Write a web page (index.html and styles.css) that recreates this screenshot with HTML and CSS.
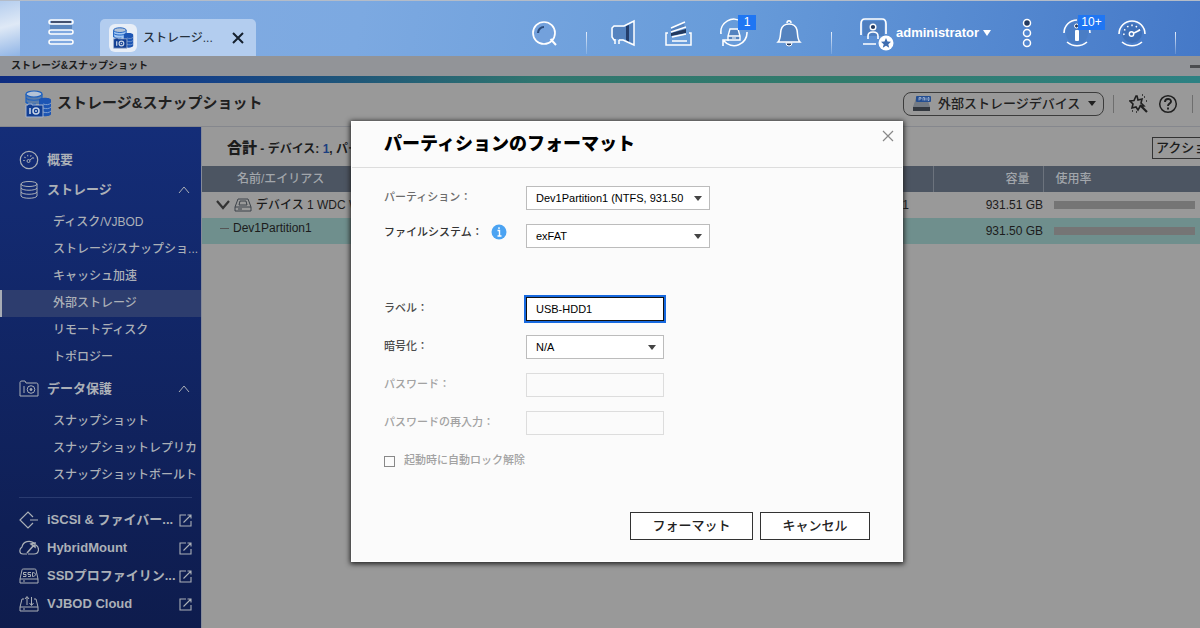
FILE: index.html
```
<!DOCTYPE html>
<html lang="ja">
<head>
<meta charset="utf-8">
<meta name="viewport" content="width=device-width, initial-scale=1">
<title>ストレージ&amp;スナップショット</title>
<link rel="stylesheet" href="styles.css">
</head>
<body>
<svg class="defs" aria-hidden="true">
  <symbol id="storage" viewBox="0 0 26 28">
    <path d="M1 4v10h16V4" fill="currentColor" opacity=".55"/>
    <path d="M1 4v9M17 4v6M1 8c2 3 14 3 16 0M1 12c2 2 6 3 10 2" fill="none" stroke="#1c60c0" stroke-width="1.2"/>
    <ellipse cx="9" cy="4" rx="8" ry="3" fill="#b5c3d6" stroke="#1c60c0" stroke-width="1.2"/>
    <path d="M14 10c0-3 12-3 12 0v14c0 3-12 3-12 0z" fill="#1d55b4"/>
    <path d="M18 14c3 1 6 1 8-1M18 18c3 1 6 1 8-1M18 22c3 1 6 1 8-1" fill="none" stroke="#7f9fd0" stroke-width="1"/>
    <path d="M1 15h2v-1h4v1h11v12H1z" fill="#123f94" stroke="#a4b4d0" stroke-width="1"/>
    <path d="M5 18v6" stroke="#c7d3e6" stroke-width="1.6"/>
    <circle cx="11" cy="21" r="3" fill="none" stroke="#c7d3e6" stroke-width="1.5"/><circle cx="11" cy="21" r="1" fill="#c7d3e6"/>
  </symbol>
  <symbol id="external" viewBox="0 0 13 13"><path d="M7 1H1v11h11V7M8.500 1H12v3.500M12 1 4.500 8.500" fill="none" stroke="currentColor" stroke-width="1.100"/></symbol>
  <symbol id="chevron" viewBox="0 0 12 8"><path d="m1 7 5-6 5 6" fill="none" stroke="currentColor"/></symbol>
</svg>

<header class="topbar">
  <div class="corner"></div>
  <button class="menu" aria-label="メニュー"><svg width="26" height="28" viewBox="0 0 26 28"><path d="M2 5h22v6H2z" fill="#5b87bf"/><g fill="#7fa8e0" stroke="#fff" stroke-width="1.500"><rect x="1" y="1" width="24" height="4" rx="2"/><rect x="1" y="11" width="24" height="4" rx="2"/><rect x="1" y="21" width="24" height="4" rx="2"/></g><path d="M3 3h20" stroke="#43506e" stroke-width="2"/></svg></button>
  <div class="tab">
    <span class="tab-icon"><svg width="22" height="22"><use href="#storage"/></svg></span>
    <span class="tab-name">ストレージ...</span>
    <button class="tab-close" aria-label="タブを閉じる"><svg width="12" height="12" viewBox="0 0 12 12"><path d="m1 1 10 10M11 1 1 11" stroke="#15202e" stroke-width="2"/></svg></button>
  </div>
  <nav class="tools">
    <button class="tool" aria-label="検索"><svg width="28" height="28" viewBox="0 0 28 28" fill="none"><circle cx="14" cy="14" r="11" fill="#73a1dc" stroke="#fff" stroke-width="1.700"/><path d="M8 14a6 6 0 0 1 6-6" stroke="#2c4c7c" stroke-width="2.200"/><path d="m20.500 20 5.500 6" stroke="#fff" stroke-width="2"/></svg></button>
    <i class="sep"></i>
    <button class="tool" aria-label="お知らせ"><svg width="28" height="28" viewBox="0 0 28 28" fill="none"><path d="M3 8h12l9-5v22l-9-5H3z" fill="#5583bf"/><path d="M16 7v14l3 2V6z" fill="#243e6b"/><path d="M5 21H4l-2-3V9l2-2h10l10-5v24l-11-5H9M5 20v5M9 21v4" stroke="#fff" stroke-width="1.500"/></svg></button>
    <button class="tool" aria-label="バックグラウンドタスク"><svg width="28" height="28" viewBox="0 0 28 28" fill="none"><path d="m6 14 15-4v4L6 17z" fill="#22395f"/><path d="m6 10 13-6 1 5-14 4z" fill="#5583bf"/><path d="m6 9 14-6M6 13l15-5M7 18l14-3M3 14H1v12h25V14h-2M7 22h15" stroke="#fff" stroke-width="1.500"/></svg></button>
    <button class="tool" aria-label="外部デバイス"><svg width="30" height="30" viewBox="0 0 30 30" fill="none"><path d="M2 16A13 13 0 0 1 23 4M28 14A13 13 0 0 1 5 23M4 28v-6h6" stroke="#fff" stroke-width="1.600"/><path d="m11 11-2 7v4h12v-4l-2-7zM9 18h12" fill="#5583bf" stroke="#fff" stroke-width="1.400"/><path d="M13 20h4" stroke="#fff"/></svg><b class="badge">1</b></button>
    <button class="tool" aria-label="通知"><svg width="28" height="28" viewBox="0 0 28 28" fill="none"><path d="M11 24a3 3 0 0 0 6 0z" fill="#22395f" stroke="#fff"/><path d="M3 23c3-3 2-7 3-12 1-4 4-6 8-6s7 2 8 6c1 5 0 9 3 12z" fill="#5583bf" stroke="#fff" stroke-width="1.500"/><path d="M12 4c0-3 4-3 4 0" stroke="#fff" stroke-width="1.500"/></svg></button>
    <i class="sep"></i>
    <button class="user"><svg width="34" height="36" viewBox="0 0 34 36" fill="none"><path d="M1 20V9c0-3 1-5 4-5h17c3 0 4 2 4 5v10M3 29h13" stroke="#fff" stroke-width="1.700"/><path d="M3 6h21v15H3z" fill="#4f7fbf"/><circle cx="13" cy="12" r="2.800" fill="#22395f" stroke="#fff" stroke-width="1.400"/><path d="M8 24v-3c0-3 2-4 5-4s5 1 5 4v3" stroke="#fff" stroke-width="1.600"/><circle cx="26" cy="28" r="7.500" fill="#fff"/><path d="m26 23 1.500 3.500 3.500.3-2.700 2.400.9 3.600-3.200-2-3.200 2 .9-3.600-2.700-2.400 3.500-.3z" fill="#3e6db0"/></svg><span>administrator</span><i class="down"></i></button>
    <button class="tool narrow" aria-label="その他"><svg width="12" height="30" viewBox="0 0 12 30" fill="none" stroke="#fff" stroke-width="1.500"><circle cx="6" cy="5" r="3.500" fill="#22395f"/><circle cx="6" cy="15" r="3.500"/><circle cx="6" cy="25" r="3.500"/></svg></button>
    <button class="tool narrow" aria-label="情報"><svg width="30" height="30" viewBox="0 0 30 30" fill="none"><circle cx="15" cy="15" r="11" fill="#4a7dc5"/><path d="M2 15A13 13 0 0 1 15 2M28 15c0-2 0-3-1-5M5 24c6 5 14 5 20 0" stroke="#fff" stroke-width="1.600"/><circle cx="14.500" cy="8" r="2" fill="#22395f" stroke="#fff"/><rect x="13" y="12" width="4" height="11" rx="1" fill="#fff"/></svg><b class="badge wide">10+</b></button>
    <button class="tool wide-tool" aria-label="ダッシュボード"><svg width="30" height="30" viewBox="0 0 30 30" fill="none"><circle cx="15" cy="15" r="10" fill="#3f70b8"/><path d="M2 16a13 13 0 0 1 26 0M5 24c6 5 14 5 20 0" stroke="#fff" stroke-width="1.600"/><path d="M7 17a8 8 0 0 1 16-3" stroke="#fff" stroke-width="1.600" stroke-dasharray="1.500 3"/><circle cx="14.500" cy="16" r="2.200" stroke="#fff" stroke-width="1.400"/><path d="m17 15 6-3" stroke="#fff" stroke-width="1.800"/></svg></button>
    <i class="sep"></i>
  </nav>
</header>

<div class="window-title"><span>ストレージ&amp;スナップショット</span><button class="minimize" aria-label="最小化"></button></div>
<div class="accent"></div>

<div class="app-head">
  <svg class="app-logo" width="26" height="28"><use href="#storage"/></svg>
  <h1>ストレージ&amp;スナップショット</h1>
  <button class="device-menu" aria-haspopup="menu"><svg width="20" height="18" viewBox="0 0 20 18"><path d="m4 3-3 9v3h17v-3l-3-9z" fill="#747b84"/><path d="M1 12h17v4H1z" fill="#33383f"/><rect x="4" y="1" width="15" height="6" rx="1" fill="#244e91"/><path d="M7 5.500v-3h2v1.500H7m4 1.500v-3h1.500v3M14 2.500v3M16 2.500h1v3h-1z" fill="none" stroke="#a9b9d4" stroke-width=".8"/></svg><span>外部ストレージデバイス</span><i class="down"></i></button>
  <i class="rule"></i>
  <button class="head-icon" aria-label="ツール"><svg width="20" height="20" viewBox="0 0 20 20" fill="none" stroke="#202020"><path d="m8 2 1 4 4-1-1 4 3 3-4 .5L9 16l-2-3-4 1 1-4-3-3 4-.5L7 2z" stroke-width="1.600"/><path d="m11 11 7 7" stroke-width="2.200"/><path d="M15 3h1M17 7h1M3 17h1M7 18h1M13 1h1" stroke-width="1.500"/></svg></button>
  <button class="head-icon" aria-label="ヘルプ"><svg width="20" height="20" viewBox="0 0 20 20" fill="none" stroke="#202020"><circle cx="10" cy="10" r="8.300" stroke-width="1.500"/><path d="M7 8c0-4 6-4 6-.5 0 2-3 2.200-3 4.500M10 13.500v2" stroke-width="1.900"/></svg></button>
  <i class="rule"></i>
</div>

<div class="workspace">
  <aside class="sidebar">
    <a class="overview" href="#"><svg width="20" height="20" viewBox="0 0 20 20" fill="none" stroke="currentColor"><circle cx="10" cy="10" r="8.700" stroke-width="1.200"/><path d="M5 11a5 5 0 0 1 10-1" stroke-dasharray="1 2.200" stroke-width="1.500"/><circle cx="9.500" cy="11" r="1.500"/><path d="m11 10 3-2.500"/></svg>概要</a>
    <button class="section"><svg width="20" height="20" viewBox="0 0 20 20" fill="none" stroke="currentColor"><ellipse cx="10" cy="4" rx="8" ry="2.500"/><path d="M2 4v12c1 3 15 3 16 0V4M2 8c1 3 15 3 16 0M2 12c1 3 15 3 16 0"/></svg>ストレージ<svg class="chev" width="12" height="8"><use href="#chevron"/></svg></button>
    <ul>
      <li><a href="#">ディスク/VJBOD</a></li>
      <li><a href="#">ストレージ/スナップショ...</a></li>
      <li><a href="#">キャッシュ加速</a></li>
      <li><a class="current" aria-current="page" href="#">外部ストレージ</a></li>
      <li><a href="#">リモートディスク</a></li>
      <li><a href="#">トポロジー</a></li>
    </ul>
    <button class="section"><svg width="20" height="20" viewBox="0 0 20 20" fill="none" stroke="currentColor"><path d="M1 17V4c0-1 0-2 2-2h3l1 2h10c1 0 2 0 2 2v11zM5 7v7"/><circle cx="12" cy="10.500" r="3.800"/><circle cx="12" cy="10.500" r="1" fill="currentColor"/></svg>データ保護<svg class="chev" width="12" height="8"><use href="#chevron"/></svg></button>
    <ul>
      <li><a href="#">スナップショット</a></li>
      <li><a href="#">スナップショットレプリカ</a></li>
      <li><a href="#">スナップショットボールト</a></li>
    </ul>
    <div class="links">
      <a href="#"><svg width="20" height="18" viewBox="0 0 20 18" fill="none" stroke="currentColor" stroke-width="1.200"><path d="m14 6-5-5-8 8 8 8 5-5M11 9h8"/></svg><span>iSCSI &amp; ファイバー...</span><svg class="ext" width="13" height="13"><use href="#external"/></svg></a>
      <a href="#"><svg width="20" height="18" viewBox="0 0 20 18" fill="none" stroke="currentColor" stroke-width="1.200"><path d="M8 15H4c-4 0-4-5-1-7 1-6 8-7 12-4M17 6c4 3 3 9-2 9H9"/><path d="m8 14 7-8M12 5l4-1v4z" stroke-width="1.500"/></svg><span>HybridMount</span><svg class="ext" width="13" height="13"><use href="#external"/></svg></a>
      <a href="#"><svg width="20" height="18" viewBox="0 0 20 18" fill="none" stroke="currentColor"><path d="M1 12V16h18v-4zM1 12l2-9c0-1 1-1 2-1h10c1 0 2 0 2 1l2 9"/><path d="M7.500 5.500h-3v2h2.500v2H4M12 5.500H9v2h2.500v2H9M13.500 5.500v4c4 0 4-4 0-4M4 14h2"/></svg><span>SSDプロファイリン...</span><svg class="ext" width="13" height="13"><use href="#external"/></svg></a>
      <a href="#"><svg width="20" height="18" viewBox="0 0 20 18" fill="none" stroke="currentColor"><path d="M1 12v4h18v-4zM1 12 3 4h2M19 12l-2-8h-2M8 10V2M6 4l2-2.500L10 4M12.500 2v8M10.500 8l2 2.500 2-2.500M4 14h2"/></svg><span>VJBOD Cloud</span><svg class="ext" width="13" height="13"><use href="#external"/></svg></a>
    </div>
  </aside>

  <main class="content">
    <div class="summary"><p><b>合計</b> - デバイス: <em>1</em>, パー</p><button class="action">アクション</button></div>
    <table>
      <colgroup><col><col class="c-cap"><col class="c-use"></colgroup>
      <thead><tr><th class="name">名前/エイリアス</th><th class="cap">容量</th><th class="use">使用率</th></tr></thead>
      <tbody>
        <tr><td><div class="device"><svg width="14" height="10" viewBox="0 0 14 10"><path d="m1 1 6 7 6-7" fill="none" stroke="#333" stroke-width="2.200"/></svg><svg width="18" height="14" viewBox="0 0 18 14" fill="none" stroke="#3d434a"><path d="M1 9v4h16V9zM1 9l3-8h10l3 8M4 11h4M5 7l1-4h6l1 4z"/></svg><span>デバイス 1 WDC WD</span><span class="count">1</span></div></td><td class="cap">931.51 GB</td><td class="use"><div class="bar"></div></td></tr>
        <tr class="selected"><td><div class="part"><i></i>Dev1Partition1</div></td><td class="cap">931.50 GB</td><td class="use"><div class="bar"></div></td></tr>
      </tbody>
    </table>
  </main>
</div>

<section class="dialog" role="dialog" aria-labelledby="dialog-title">
  <header><h2 id="dialog-title">パーティションのフォーマット</h2><button class="close" aria-label="閉じる"><svg width="12" height="12" viewBox="0 0 12 12"><path d="m1 1 10 10M11 1 1 11" stroke="#888" stroke-width="1.200"/></svg></button></header>
  <form>
    <div class="row"><label class="soft" for="partition">パーティション：</label><div class="pick wide"><select id="partition"><option>Dev1Partition1 (NTFS, 931.50</option></select></div></div>
    <div class="row"><label class="strong" for="fs">ファイルシステム：<svg width="16" height="16" viewBox="0 0 16 16"><circle cx="8" cy="8" r="7.500" fill="#4ba3f2"/><path d="M6.500 6.500H8.500V12M6.500 12h4M8 3.200v1.800" stroke="#fff" stroke-width="1.400" fill="none"/></svg></label><div class="pick wide"><select id="fs"><option>exFAT</option></select></div></div>
    <div class="row apart"><label for="label">ラベル：</label><input class="focused" id="label" type="text" value="USB-HDD1"></div>
    <div class="row"><label for="enc">暗号化：</label><div class="pick"><select id="enc"><option>N/A</option></select></div></div>
    <div class="row off"><label for="pw">パスワード：</label><input id="pw" type="password" disabled></div>
    <div class="row off"><label for="pw2">パスワードの再入力：</label><input id="pw2" type="password" disabled></div>
    <div class="row off"><input id="unlock" type="checkbox" disabled><label class="check-label" for="unlock">起動時に自動ロック解除</label></div>
    <div class="actions"><button class="submit" type="button">フォーマット</button><button class="cancel" type="button">キャンセル</button></div>
  </form>
</section>
</body>
</html>
```
FILE: styles.css
```
* { box-sizing: border-box; }
body {
  margin: 0;
  min-height: 100vh;
  display: flex;
  flex-direction: column;
  overflow: hidden;
  position: relative;
  background: #999;
  color: #1c1c1c;
  font: 500 12px/18px "Liberation Sans", "Noto Sans CJK JP", sans-serif;
}
button { margin: 0; padding: 0; border: 0; background: none; color: inherit; font: inherit; }
a { color: inherit; text-decoration: none; }
ul { margin: 0; padding: 0; list-style: none; }
h1, h2, p { margin: 0; }
svg { display: block; flex: none; }
.defs { position: absolute; width: 0; height: 0; }

.topbar {
  display: flex;
  height: 56px;
  border-top: 1px solid #b4bcc8;
  background: linear-gradient(100deg, #84ace2 0%, #7ca9e1 30%, #689cda 60%, #4579c8 100%);
}
.corner { width: 20px; background: linear-gradient(165deg, #b4cdee, #dfe9f6 45%, #8fb4e6); }
.menu { width: 28px; margin-left: 28px; padding-top: 8px; }
.tab {
  display: flex;
  align-items: center;
  width: 156px;
  height: 37px;
  margin: 18px 0 0 24px;
  padding: 0 12px 0 9px;
  border-radius: 5px 5px 0 0;
  background: #b3cdef;
  color: #26313e;
}
.tab-icon { padding: 3px; border-radius: 6px; background: #e8eef7; color: #69a9f4; }
.tab-name { margin-left: 6px; flex: 1; white-space: nowrap; }
.tools { display: flex; align-items: center; margin-left: auto; padding: 9px 15px 0 0; color: #fff; }
.tool { position: relative; width: 55px; height: 46px; display: grid; place-items: center; }
.narrow { width: 50px; }
.wide-tool { width: 60px; }
.sep { width: 1px; height: 22px; margin: 20px 9px 0 15px; background: linear-gradient(#e6eefa, #ffffff22); }
.sep:last-child { margin-left: 13px; }
.badge {
  position: absolute;
  left: 32px;
  top: 5px;
  width: 18px;
  background: #1f76f3;
  font: 12px/15px "Liberation Sans", sans-serif;
}
.badge.wide { left: 26px; width: 27px; }
.user { display: flex; align-items: center; width: 161px; padding-left: 19px; font-size: 13px; font-weight: bold; }
.user span { margin-left: 2px; }
.down { margin-left: 4px; border: 4px solid transparent; border-top: 6px solid; border-bottom: 0; }

.window-title {
  display: flex;
  align-items: center;
  justify-content: space-between;
  padding-left: 11px;
  background: #929498;
  font-size: 10px;
  font-weight: bold;
  line-height: 20px;
}
.minimize { width: 10px; height: 3px; background: #4b4d50; }
.accent { height: 7px; background: linear-gradient(90deg, #0e2c80, #123d8a 15%, #205878 30%, #30766f 45%, #317b6c 70%, #2d8183); }

.app-head { display: flex; align-items: center; height: 44px; padding: 0 7px 2px 25px; border-bottom: 1px solid #85878d; color: #202020; }
.app-logo { color: #2c66b4; }
h1 { margin-left: 6px; padding-bottom: 2px; font-size: 15px; line-height: 20px; }
.device-menu {
  display: flex;
  align-items: center;
  width: 201px;
  height: 24px;
  margin-left: auto;
  padding: 0 7px 0 8px;
  border: 1px solid #3c3c3c;
  border-radius: 8px;
  font-size: 13px;
  white-space: nowrap;
}
.device-menu span { margin-left: 6px; flex: 1; text-align: left; }
.device-menu .down { border-top-width: 5px; }
.rule { width: 1px; height: 18px; margin: 0 0 0 9px; background: #6e6e6e; }
.rule + .head-icon { margin-left: 15px; }
.head-icon + .head-icon { margin-left: 9px; }
.head-icon + .rule { margin-left: 14px; }

.workspace { display: flex; flex: 1; }
.sidebar { flex: none; width: 202px; padding: 21px 0 10px; border-right: 1px solid #858a99; background: linear-gradient(#142d78, #0f1f55 80%, #0e1c4d); color: #abb0b7; }
.overview, .section { display: flex; align-items: center; width: 100%; padding: 0 11px 0 19px; gap: 8px; font-size: 13px; font-weight: bold; }
.overview { height: 24px; }
.section { height: 36px; }
.chev { margin-left: auto; }
.sidebar ul { padding-top: 1px; }
.sidebar li a { display: block; padding-left: 53px; line-height: 27px; white-space: nowrap; }
.sidebar li .current { padding-left: 51px; border-left: 2px solid #a7acb5; background: #2d3d6e; }
.links { margin: 8px 9px 0 19px; padding-top: 8px; border-top: 1px solid #2a3b70; }
.links a { display: flex; align-items: center; height: 28px; font-size: 13px; font-weight: bold; white-space: nowrap; }
.links span { margin-left: 8px; }
.ext { margin-left: auto; }

.content { flex: 1; min-width: 0; }
.summary { display: flex; align-items: center; height: 39px; padding: 3px 0 0 25px; font-weight: bold; white-space: nowrap; overflow: hidden; }
.summary p { flex: 1; }
.summary b { font-size: 15px; }
.summary em { font-style: normal; color: #1c3f80; }
.action { flex: none; width: 48px; height: 22px; padding-left: 3px; border: 1px solid #333; border-right: 0; font-size: 13px; font-weight: 500; text-align: left; overflow: hidden; }
table { width: 100%; table-layout: fixed; border-collapse: collapse; }
.c-cap { width: 110px; }
.c-use { width: 157px; }
th { height: 26px; padding: 0; background: #4c5562; color: #a2a6ab; font-weight: 500; text-align: left; }
th + th { border-left: 1px solid #6c737d; }
th.name { padding-left: 35px; }
th.cap { padding-right: 13px; text-align: right; }
th.use { padding-left: 12px; }
td { height: 26px; padding: 0; white-space: nowrap; }
td.cap { text-align: right; }
td.use { padding: 0 5px 0 11px; }
.bar { height: 8px; background: #757575; }
.device { display: flex; align-items: center; gap: 4px; padding: 0 24px 0 14px; }
.count { margin-left: auto; }
.selected { background: #6f8f8d; }
.part { display: flex; align-items: center; padding: 0 0 6px 18px; }
.part i { width: 9px; height: 1px; margin-right: 4px; background: #555; }

.dialog {
  position: absolute;
  left: calc(50% - 249px);
  top: 121px;
  width: 552px;
  background: #fbfbfb;
  border: 1px solid #fff;
  box-shadow: 0 1px 5px 1px #222;
}
.dialog header { display: flex; justify-content: space-between; align-items: flex-start; height: 46px; padding: 8px 8px 0 32px; border-bottom: 1px solid #ddd; }
.dialog h2 { font-size: 18px; line-height: 28px; font-weight: 900; color: #000; }
form { display: flex; flex-direction: column; gap: 14px; padding: 18px 32px 21px; }
.row { display: flex; align-items: center; height: 24px; }
.row.apart { margin-top: 35px; }
label { display: flex; align-items: center; width: 142px; padding-bottom: 2px; font-size: 11px; color: #4c4c4c; }
label.soft { color: #6c6c6c; }
label.strong { padding-bottom: 8px; color: #333; }
label svg { margin-left: 8px; }
.off label { color: #a2a2a2; }
select, input { height: 24px; margin: 0; border: 1px solid #bcbcbc; border-radius: 0; background: #fff; color: #000; font: 11px "Liberation Sans", sans-serif; }
.row > input { width: 138px; padding: 0 9px; }
.row .focused { border: 1px solid #111; outline: 2px solid #1769df; }
.row input:disabled { border-color: #ddd; background: #fbfbfb; }
.pick { position: relative; width: 138px; }
.pick.wide { width: 184px; }
.pick select { display: block; width: 100%; padding: 0 9px; appearance: none; }
.pick::after { content: ""; position: absolute; right: 8px; top: 10px; border: 4px solid transparent; border-top: 5px solid #444; border-bottom: 0; pointer-events: none; }
.row input[type="checkbox"] { appearance: none; width: 11px; height: 11px; padding: 0; border-color: #888; }
.row .check-label { width: auto; margin-left: 9px; padding: 0 0 2px; }
.actions { display: flex; justify-content: flex-end; gap: 7px; margin-top: 25px; }
.actions button { height: 28px; border: 1px solid #333; background: #fff; color: #222; font-size: 13px; }
.submit { width: 123px; }
.cancel { width: 110px; }
```
